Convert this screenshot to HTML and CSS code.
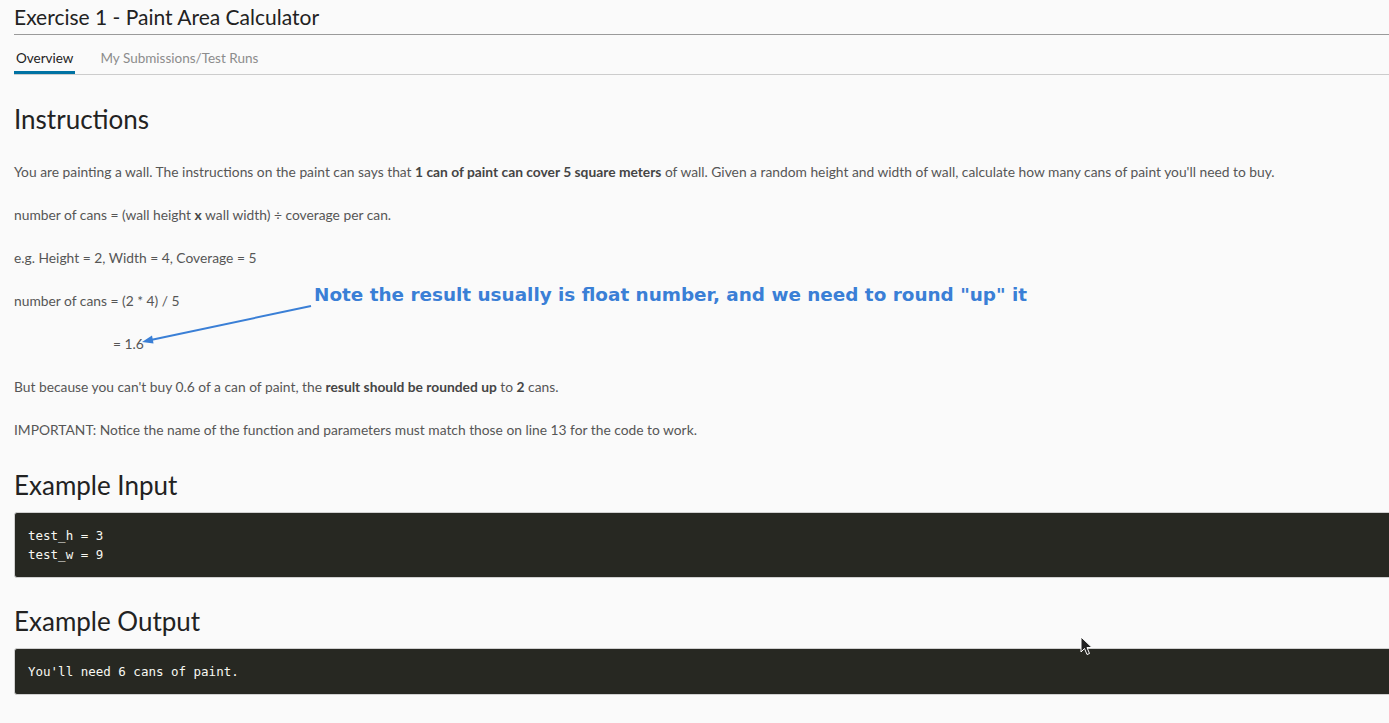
FILE: index.html
```html
<!DOCTYPE html>
<html>
<head>
<meta charset="utf-8">
<link rel="stylesheet" href="styles.css">
</head>
<body>
<div class="page">
  <header class="title-bar">
    <h1 class="title">Exercise 1 - Paint Area Calculator</h1>
  </header>
  <nav class="tabs">
    <span class="tab active">Overview</span>
    <span class="tab">My Submissions/Test Runs</span>
  </nav>
  <main class="content">
    <h2 class="section-title">Instructions</h2>
    <div class="instructions">
      <p class="para">You are painting a wall. The instructions on the paint can says that <b>1 can of paint can cover 5 square meters</b> of wall. Given a random height and width of wall, calculate how many cans of paint you'll need to buy.</p>
      <p class="para">number of cans = (wall height <b>x</b> wall width) ÷ coverage per can.</p>
      <p class="para">e.g. Height = 2, Width = 4, Coverage = 5</p>
      <p class="para">number of cans = (2 * 4) / 5</p>
      <p class="para indent">= 1.6</p>
      <p class="para">But because you can't buy 0.6 of a can of paint, the <b>result should be rounded up</b> to <b>2</b> cans.</p>
      <p class="para">IMPORTANT: Notice the name of the function and parameters must match those on line 13 for the code to work.</p>
    </div>
    <h2 class="section-title">Example Input</h2>
    <pre class="code">test_h = 3
test_w = 9</pre>
    <h2 class="section-title after-code">Example Output</h2>
    <pre class="code">You'll need 6 cans of paint.</pre>
  </main>
</div>
<div class="note">Note the result usually is float number, and we need to round "up" it</div>
<svg class="arrow" width="180" height="50" viewBox="0 0 180 50">
  <line x1="171" y1="5" x2="6" y2="40" stroke="#3a7fd6" stroke-width="2"/>
  <path d="M2 41 L12 34.5 L13.5 42.5 Z" fill="#3a7fd6"/>
</svg>
<svg class="cursor" width="14" height="22" viewBox="0 0 14 22">
  <path d="M1 1 L1 16 L4.5 12.5 L7 18.5 L9.5 17.5 L7 11.5 L12 11.5 Z" fill="#222" stroke="#fff" stroke-width="1"/>
</svg>
</body>
</html>
```
FILE: styles.css
```css
html, body {
  margin: 0;
  padding: 0;
  background: #fafafa;
  overflow: hidden;
  width: 1389px;
  height: 723px;
}
body {
  font-family: "Lato", "Noto Sans", sans-serif;
  color: #565656;
  position: relative;
}
.page {
  padding-left: 14px;
}
.title-bar {
  border-bottom: 1px solid #9a9a9a;
  padding-top: 5px;
  height: 29px;
  box-sizing: content-box;
}
.title {
  margin: 0;
  font-weight: 400;
  font-size: 21px;
  line-height: 24px;
  color: #222;
}
.tabs {
  display: flex;
  gap: 23px;
  border-bottom: 1px solid #cccccc;
  height: 39px;
  align-items: flex-end;
}
.tab {
  font-size: 13.5px;
  color: #8c8c8c;
  padding: 0 2px;
  height: 24px;
  line-height: 16px;
  box-sizing: border-box;
}
.tab.active {
  color: #222;
  border-bottom: 3px solid #0072a3;
}
.section-title {
  margin: 0;
  font-weight: 400;
  font-size: 26px;
  line-height: 32px;
  color: #222;
  padding-top: 28px;
  padding-bottom: 11px;
}
.section-title.after-code {
  padding-top: 27px;
}
.instructions {
  display: flex;
  flex-direction: column;
  gap: 25px;
  padding-top: 17px;
  padding-bottom: 2px;
}
.para {
  margin: 0;
  font-size: 13.8px;
  line-height: 18px;
}
.para b {
  color: #454545;
  font-weight: 700;
}
.para.indent {
  padding-left: 99px;
}
.code {
  margin: 0 -20px 0 0;
  background: #272822;
  color: #f8f8f2;
  font-family: "DejaVu Sans Mono", monospace;
  font-size: 12.5px;
  line-height: 19px;
  padding: 13px 13px;
  border-radius: 3px;
  border: 1px solid #d0d0d0;
}
.note {
  position: absolute;
  left: 314px;
  top: 284px;
  font-family: "DejaVu Sans", sans-serif;
  font-weight: 700;
  font-size: 18.4px;
  color: #3a7fd6;
  white-space: nowrap;
}
.arrow {
  position: absolute;
  left: 140px;
  top: 301px;
}
.cursor {
  position: absolute;
  left: 1080px;
  top: 636px;
}
```
